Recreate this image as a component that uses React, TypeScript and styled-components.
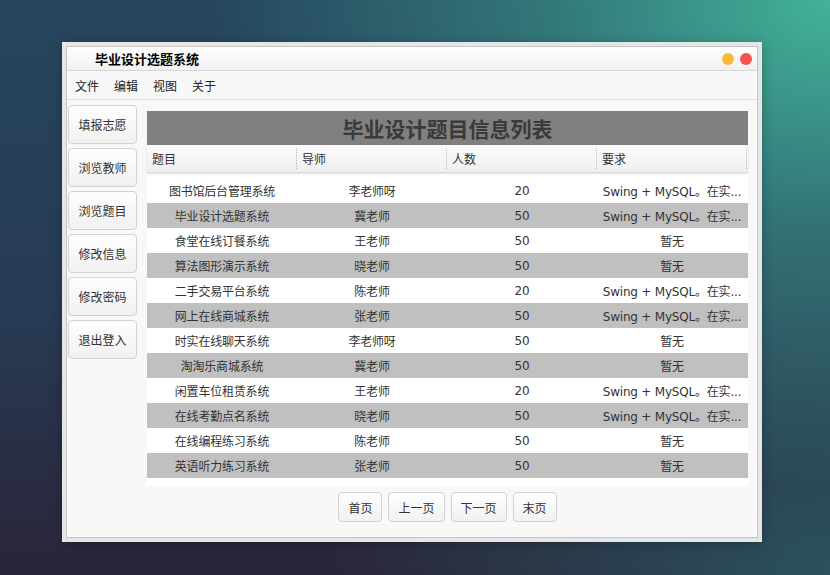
import React from "react";
import styled, { createGlobalStyle } from "styled-components";

const GlobalStyle = createGlobalStyle`
  html, body { margin: 0; padding: 0; }
  body {
    font-family: "DejaVu Sans", "Noto Sans CJK SC", sans-serif;
    font-size: 12px;
    color: #333;
  }
  * { box-sizing: border-box; }
`;

const Page = styled.div`
  width: 830px;
  height: 575px;
  padding: 42px 0 0 62px;
  background:
    radial-gradient(ellipse 75% 85% at 100% 0%, rgba(66, 178, 152, 1) 0%, rgba(60, 160, 145, 0.55) 45%, rgba(50, 120, 130, 0) 100%),
    radial-gradient(ellipse 60% 60% at 100% 100%, rgba(44, 86, 98, 0.9) 0%, rgba(44, 86, 98, 0) 100%),
    linear-gradient(to bottom, #26465e 0%, #283a54 55%, #2a2538 100%);
  overflow: hidden;
`;

const Window = styled.div`
  width: 700px;
  height: 500px;
  padding: 4px;
  background: #e6e6e6;
  box-shadow: 0 2px 10px rgba(0, 0, 0, 0.25);
`;

const Frame = styled.div`
  height: 100%;
  border: 1px solid #c6c6c6;
  background: #f8f8f8;
  display: flex;
  flex-direction: column;
`;

const TitleBar = styled.div`
  height: 24px;
  flex: none;
  display: flex;
  align-items: center;
  padding: 0 5px 0 28px;
  border-bottom: 1px solid #d6d6d6;
  background: linear-gradient(to bottom, #fdfdfd, #f2f2f2);
`;

const Title = styled.div`
  flex: 1;
  font-size: 13px;
  font-weight: bold;
  color: #000;
`;

const Dots = styled.div`
  display: flex;
  gap: 6px;
`;

const Dot = styled.span<{ $color: string }>`
  width: 12px;
  height: 12px;
  border-radius: 50%;
  background: ${(p) => p.$color};
`;

const MenuBar = styled.div`
  height: 29px;
  flex: none;
  display: flex;
  align-items: center;
  gap: 15px;
  padding-left: 8px;
  border-bottom: 1px solid #dcdcdc;
  font-size: 12px;
  color: #222;
`;

const Body = styled.div`
  flex: 1;
  display: flex;
  padding: 5px 9px 0 1px;
  gap: 10px;
  min-height: 0;
`;

const Sidebar = styled.div`
  width: 69px;
  flex: none;
  display: flex;
  flex-direction: column;
  gap: 4px;
`;

const SideButton = styled.button`
  height: 39px;
  border: 1px solid #d2d2d2;
  border-radius: 4px;
  background: linear-gradient(to bottom, #fefefe, #f1f1f1);
  font-family: inherit;
  font-size: 12px;
  color: #333;
  padding: 0;
  cursor: pointer;
`;

const Main = styled.div`
  flex: 1;
  display: flex;
  flex-direction: column;
  padding-top: 6px;
`;

const Banner = styled.div`
  height: 34px;
  background: #808080;
  display: flex;
  align-items: center;
  justify-content: center;
  font-size: 21px;
  font-weight: bold;
  color: #3a3a3a;
`;

const HeaderRow = styled.div`
  height: 28px;
  display: grid;
  grid-template-columns: repeat(4, 150px);
  background: linear-gradient(to bottom, #fbfbfb, #efefef);
  border-bottom: 1px solid #d9d9d9;
  box-shadow: 0 1px 2px rgba(0, 0, 0, 0.12);
  position: relative;
  z-index: 1;
`;

const HeaderCell = styled.div`
  display: flex;
  align-items: center;
  padding-left: 5px;
  font-size: 12px;
  color: #333;
  border-right: 1px dotted #bdbdbd;
  margin: 3px 0;
`;

const Viewport = styled.div`
  height: 313px;
  background: #fff;
  padding-top: 5px;
`;

const Row = styled.div<{ $alt: boolean }>`
  height: 25px;
  display: grid;
  grid-template-columns: repeat(4, 150px);
  background: ${(p) => (p.$alt ? "#c0c0c0" : "#ffffff")};
`;

const Cell = styled.div`
  display: flex;
  align-items: center;
  justify-content: center;
  font-size: 12px;
  letter-spacing: -0.2px;
  color: #333;
  white-space: nowrap;
  overflow: visible;
`;

const Pager = styled.div`
  display: flex;
  justify-content: center;
  gap: 6px;
  margin-top: 6px;
`;

const PageButton = styled.button`
  height: 30px;
  padding: 0 9px;
  border: 1px solid #d2d2d2;
  border-radius: 4px;
  background: linear-gradient(to bottom, #fefefe, #f1f1f1);
  font-family: inherit;
  font-size: 12px;
  color: #333;
  cursor: pointer;
`;

const REQ = "Swing + MySQL。在实...";
const NONE = "暂无";

const rows: [string, string, string, string][] = [
  ["图书馆后台管理系统", "李老师呀", "20", REQ],
  ["毕业设计选题系统", "冀老师", "50", REQ],
  ["食堂在线订餐系统", "王老师", "50", NONE],
  ["算法图形演示系统", "晓老师", "50", NONE],
  ["二手交易平台系统", "陈老师", "20", REQ],
  ["网上在线商城系统", "张老师", "50", REQ],
  ["时实在线聊天系统", "李老师呀", "50", NONE],
  ["淘淘乐商城系统", "冀老师", "50", NONE],
  ["闲置车位租赁系统", "王老师", "20", REQ],
  ["在线考勤点名系统", "晓老师", "50", REQ],
  ["在线编程练习系统", "陈老师", "50", NONE],
  ["英语听力练习系统", "张老师", "50", NONE],
];

const sideItems = ["填报志愿", "浏览教师", "浏览题目", "修改信息", "修改密码", "退出登入"];
const menus = ["文件", "编辑", "视图", "关于"];
const headers = ["题目", "导师", "人数", "要求"];
const pages = ["首页", "上一页", "下一页", "末页"];

export default function App() {
  return (
    <>
      <GlobalStyle />
      <Page>
        <Window>
          <Frame>
            <TitleBar>
              <Title>毕业设计选题系统</Title>
              <Dots>
                <Dot $color="#fbb935" />
                <Dot $color="#f9524f" />
              </Dots>
            </TitleBar>
            <MenuBar>
              {menus.map((m) => (
                <span key={m}>{m}</span>
              ))}
            </MenuBar>
            <Body>
              <Sidebar>
                {sideItems.map((s) => (
                  <SideButton key={s}>{s}</SideButton>
                ))}
              </Sidebar>
              <Main>
                <Banner>毕业设计题目信息列表</Banner>
                <HeaderRow>
                  {headers.map((h) => (
                    <HeaderCell key={h}>{h}</HeaderCell>
                  ))}
                </HeaderRow>
                <Viewport>
                  {rows.map((r, i) => (
                    <Row key={i} $alt={i % 2 === 1}>
                      {r.map((c, j) => (
                        <Cell key={j}>{c}</Cell>
                      ))}
                    </Row>
                  ))}
                </Viewport>
                <Pager>
                  {pages.map((p) => (
                    <PageButton key={p}>{p}</PageButton>
                  ))}
                </Pager>
              </Main>
            </Body>
          </Frame>
        </Window>
      </Page>
    </>
  );
}
